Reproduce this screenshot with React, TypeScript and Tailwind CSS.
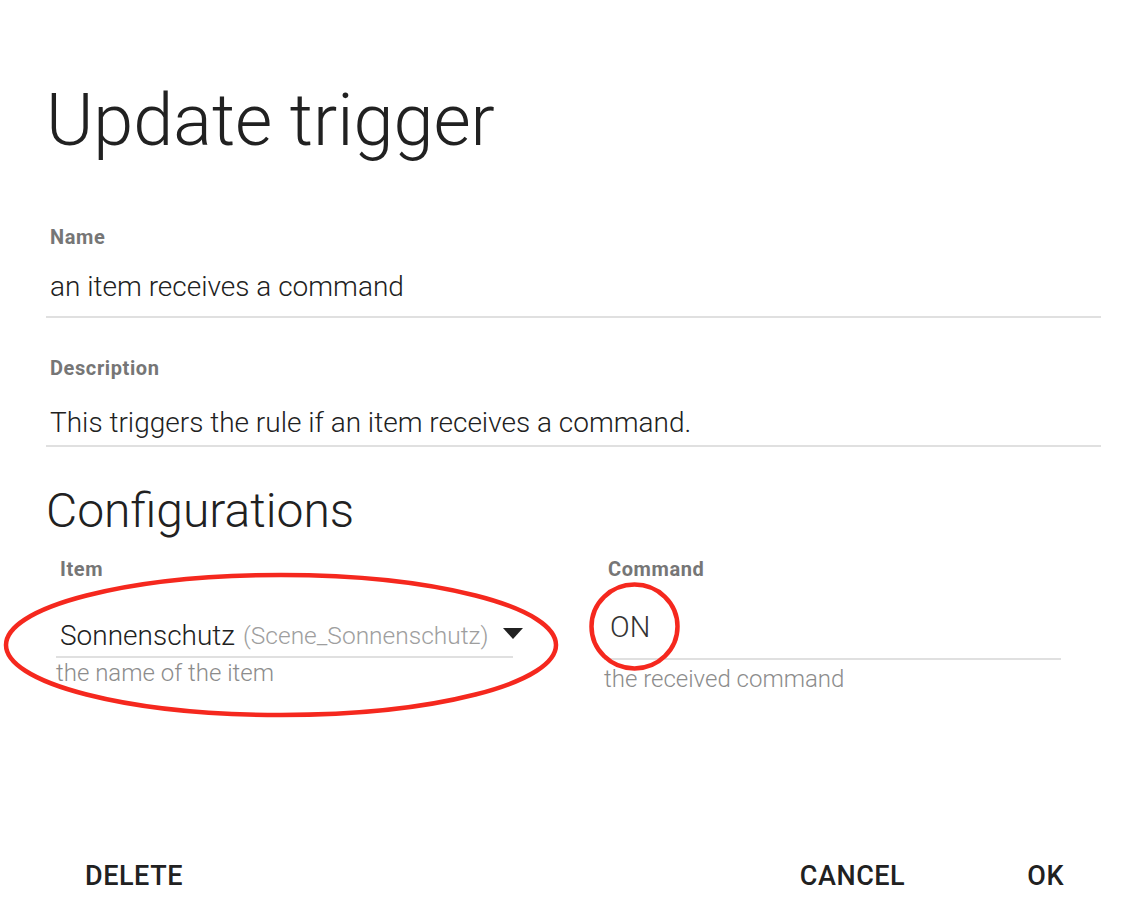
import React from "react";

const Label = ({ children, className = "" }: { children: React.ReactNode; className?: string }) => (
  <div className={`text-[20px] leading-none font-bold tracking-[0.03em] text-[#767676] ${className}`}>{children}</div>
);

export default function App() {
  return (
    <div className="relative flex h-[922px] w-[1148px] flex-col bg-white pl-[46px] pr-[47px] font-['Roboto',sans-serif] text-[#212121]">
      {/* Title */}
      <h1 className="mt-[85px] text-[72px] leading-none font-light">Update trigger</h1>

      {/* Name */}
      <div className="mt-[70px]">
        <Label className="pl-[4px]">Name</Label>
        <div className="mt-[22px] border-b-2 border-[#e0e0e0] pb-[11px] pl-[4px] text-[28px] leading-[36px] font-light">
          an item receives a command
        </div>
      </div>

      {/* Description */}
      <div className="mt-[40px]">
        <Label className="pl-[4px]">Description</Label>
        <div className="mt-[27px] border-b-2 border-[#e0e0e0] pb-[4px] pl-[4px] text-[28px] leading-[36px] font-light">
          This triggers the rule if an item receives a command.
        </div>
      </div>

      {/* Configurations */}
      <h2 className="mt-[40px] text-[48px] leading-none font-light">Configurations</h2>

      <div className="mt-[24px] flex gap-[91px] pl-[10px]">
        {/* Item select */}
        <div className="w-[457px]">
          <Label className="pl-[4px]">Item</Label>
          <div className="mt-[39px] flex items-center border-b-2 border-[#e0e0e0] pb-[2px] pl-[4px]">
            <span className="text-[28px] leading-[36px] font-light">Sonnenschutz</span>
            <span className="ml-[8px] text-[24.5px] leading-[36px] font-light text-[#9e9e9e]">(Scene_Sonnenschutz)</span>
            <svg width="20" height="12" viewBox="0 0 20 12" className="ml-auto mr-[-10px] mb-[4px]">
              <path d="M0 0 L20 0 L10 11 Z" fill="#212121" />
            </svg>
          </div>
          <div className="mt-[1px] text-[24px] leading-[28px] font-light text-[#8c8c8c]">the name of the item</div>
        </div>

        {/* Command */}
        <div className="w-[457px]">
          <Label className="pl-[4px]">Command</Label>
          <div className="mt-[30px] border-b-2 border-[#e0e0e0] pb-[13px] pl-[6px] text-[29px] leading-[36px] font-light text-[#333333]">
            ON
          </div>
          <div className="mt-[5px] text-[24px] leading-[28px] font-light text-[#8c8c8c]">the received command</div>
        </div>
      </div>

      {/* Actions */}
      <div className="mt-auto mb-[32px] flex items-center pl-[39px] pr-[37px] text-[27px] leading-none font-medium tracking-[0.02em]">
        <button>DELETE</button>
        <div className="flex-1" />
        <button>CANCEL</button>
        <button className="ml-[122px]">OK</button>
      </div>

      {/* Annotation marks */}
      <svg className="pointer-events-none absolute top-0 left-0" width="1148" height="922">
        <ellipse cx="281" cy="645" rx="275" ry="70" fill="none" stroke="#f5281e" strokeWidth="4.5" />
        <ellipse cx="634.5" cy="626.5" rx="43" ry="42" fill="none" stroke="#f5281e" strokeWidth="4.5" />
      </svg>
    </div>
  );
}
